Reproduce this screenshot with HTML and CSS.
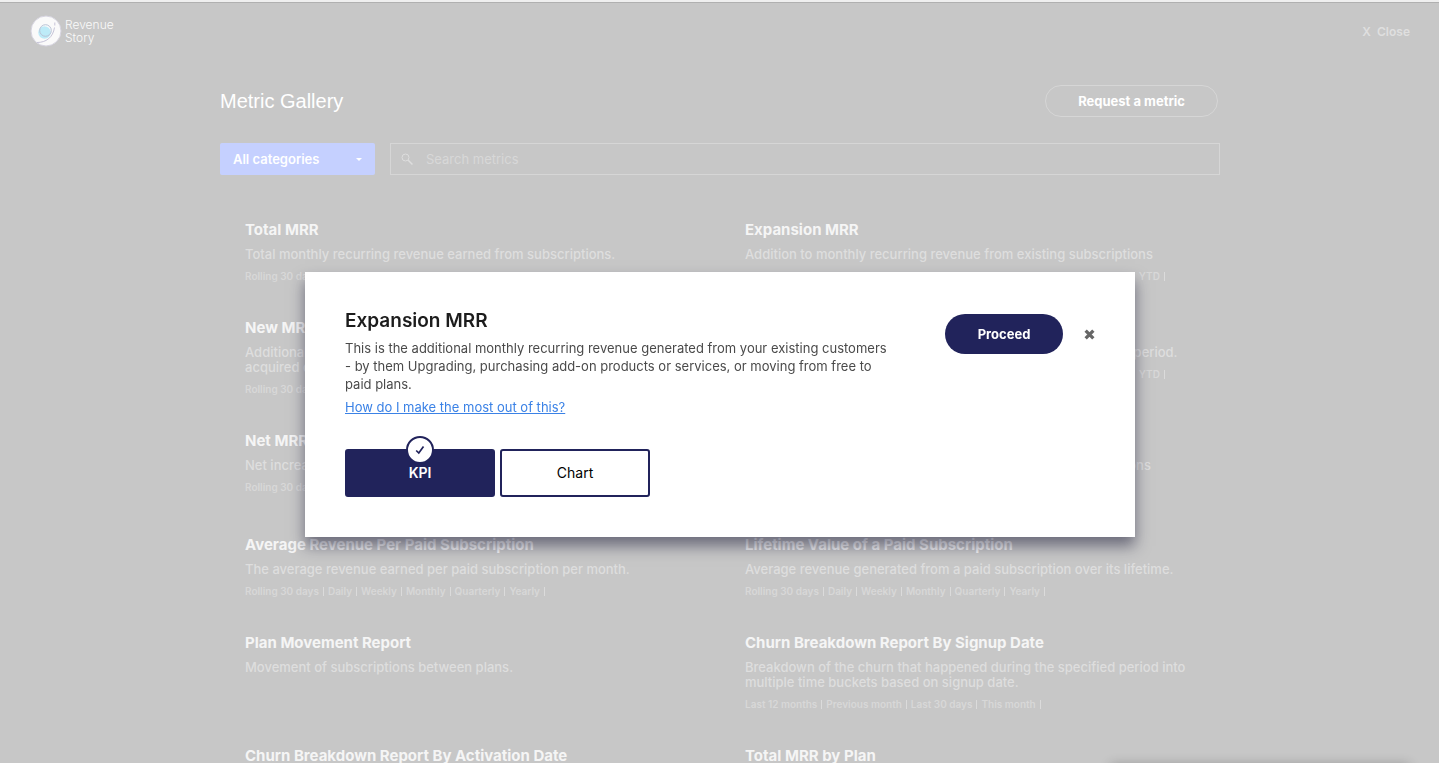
FILE: index.html
```html
<!DOCTYPE html>
<html lang="en">
<head>
<meta charset="utf-8">
<title>Metric Gallery</title>
<link rel="stylesheet" href="styles.css">
</head>
<body>
<div class="page">
  <header class="topbar">
    <a class="brand" href="#">
      <svg class="brand-mark" viewBox="0 0 32 32" aria-hidden="true">
        <circle cx="16" cy="16" r="15" fill="#fafafa" stroke="#d6d4e0"/>
        <circle cx="14.500" cy="17.500" r="6.200" fill="#bdebf8"/>
        <circle cx="15.500" cy="15.500" r="5.800" fill="none" stroke="#b9c3d6"/>
        <path d="M7 27.500c9 0 16-5 17.500-15" fill="none" stroke="#c6c4d8"/>
        <path d="M24.800 7.500v3" fill="none" stroke="#c6c4d8"/>
      </svg>
      <span class="brand-name">Revenue<br>Story</span>
    </a>
    <button class="close-page" type="button">X&nbsp; Close</button>
  </header>

  <main class="gallery">
    <div class="heading">
      <h1 class="heading-title">Metric Gallery</h1>
      <button class="request" type="button">Request a metric</button>
    </div>
    <div class="filters">
      <div class="category">
        <select class="category-select" aria-label="Category"><option>All categories</option></select>
        <svg class="category-caret" viewBox="0 0 6 3" aria-hidden="true"><path d="M0 0h6L3 3z" fill="#fff"/></svg>
      </div>
      <label class="search">
        <svg class="search-icon" viewBox="0 0 13 13" fill="none" stroke="#dedede" aria-hidden="true"><circle cx="4.500" cy="4.500" r="3.500"/><path d="M7.200 7.200l4.300 4.300" stroke-width="1.500"/></svg>
        <input class="search-input" type="text" placeholder="Search metrics" aria-label="Search metrics">
      </label>
    </div>

    <div class="metrics">
      <article class="metric">
        <h2 class="metric-title">Total MRR</h2>
        <p class="metric-text">Total monthly recurring revenue earned from subscriptions.</p>
        <ul class="periods"><li>Rolling 30 days</li></ul>
      </article>
      <article class="metric">
        <h2 class="metric-title">Expansion MRR</h2>
        <p class="metric-text">Addition to monthly recurring revenue from existing subscriptions</p>
        <ul class="periods"><li>Rolling 30 days</li><li>Daily</li><li>Weekly</li><li>Monthly</li><li>Quarterly</li><li>Yearly</li><li>MTD</li><li>Last week</li><li>YTD</li></ul>
      </article>
      <article class="metric">
        <h2 class="metric-title">New MRR</h2>
        <p class="metric-text">Additional monthly recurring revenue from newly<br>acquired customers.</p>
        <ul class="periods"><li>Rolling 30 days</li></ul>
      </article>
      <article class="metric">
        <h2 class="metric-title">Contraction MRR</h2>
        <p class="metric-text">Monthly recurring revenue lost by downgrades in the selected period.</p>
        <ul class="periods"><li>Rolling 30 days</li><li>Daily</li><li>Weekly</li><li>Monthly</li><li>Quarterly</li><li>Yearly</li><li>MTD</li><li>Last week</li><li>YTD</li></ul>
      </article>
      <article class="metric metric-tall">
        <h2 class="metric-title">Net MRR</h2>
        <p class="metric-text">Net increase in monthly recurring revenue.</p>
        <ul class="periods"><li>Rolling 30 days</li></ul>
      </article>
      <article class="metric metric-tall">
        <h2 class="metric-title">Churned MRR</h2>
        <p class="metric-text">Drop in monthly recurring revenue from discounted subscriptions</p>
      </article>
      <article class="metric">
        <h2 class="metric-title">Average Revenue Per Paid Subscription</h2>
        <p class="metric-text">The average revenue earned per paid subscription per month.</p>
        <ul class="periods"><li>Rolling 30 days</li><li>Daily</li><li>Weekly</li><li>Monthly</li><li>Quarterly</li><li>Yearly</li></ul>
      </article>
      <article class="metric">
        <h2 class="metric-title">Lifetime Value of a Paid Subscription</h2>
        <p class="metric-text">Average revenue generated from a paid subscription over its lifetime.</p>
        <ul class="periods"><li>Rolling 30 days</li><li>Daily</li><li>Weekly</li><li>Monthly</li><li>Quarterly</li><li>Yearly</li></ul>
      </article>
      <article class="metric">
        <h2 class="metric-title">Plan Movement Report</h2>
        <p class="metric-text">Movement of subscriptions between plans.</p>
      </article>
      <article class="metric">
        <h2 class="metric-title">Churn Breakdown Report By Signup Date</h2>
        <p class="metric-text">Breakdown of the churn that happened during the specified period into multiple time buckets based on signup date.</p>
        <ul class="periods"><li>Last 12 months</li><li>Previous month</li><li>Last 30 days</li><li>This month</li></ul>
      </article>
      <article class="metric">
        <h2 class="metric-title">Churn Breakdown Report By Activation Date</h2>
      </article>
      <article class="metric">
        <h2 class="metric-title">Total MRR by Plan</h2>
      </article>
    </div>
  </main>
</div>
<div class="widget-shadow"></div>

<div class="overlay">
  <section class="dialog" role="dialog" aria-labelledby="dialog-title">
    <div class="dialog-head">
      <div class="dialog-copy">
        <h2 class="dialog-title" id="dialog-title">Expansion MRR</h2>
        <p class="dialog-text">This is the additional monthly recurring revenue generated from your existing customers - by them Upgrading, purchasing add-on products or services, or moving from free to paid plans.</p>
        <a class="dialog-link" href="#">How do I make the most out of this?</a>
      </div>
      <div class="dialog-actions">
        <button class="proceed" type="button">Proceed</button>
        <button class="dismiss" type="button" aria-label="Dismiss">
          <svg class="dismiss-icon" viewBox="0 0 10 10" aria-hidden="true"><path d="M1.500 1.500l7 7M8.500 1.500l-7 7" stroke="#666" stroke-width="3"/></svg>
        </button>
      </div>
    </div>
    <div class="types">
      <button class="type type-selected" type="button" aria-pressed="true">KPI
        <span class="type-badge"><svg class="type-check" viewBox="0 0 10 10" aria-hidden="true"><path d="M1.200 5.500L3.800 8 8.500 1.500" fill="none" stroke="#21235b" stroke-width="1.700"/></svg></span>
      </button>
      <button class="type" type="button" aria-pressed="false">Chart</button>
    </div>
  </section>
</div>
</body>
</html>
```
FILE: styles.css
```css
* { box-sizing: border-box; }

body {
  margin: 0;
  height: 100vh;
  overflow: hidden;
  background: #c7c7c7;
  color: #fff;
  font-family: Inter, "Liberation Sans", sans-serif;
}

h1, h2, p, ul { margin: 0; padding: 0; }
button, input, select { font: inherit; color: inherit; }
button { cursor: pointer; }

.page {
  padding-left: 1px;
  border-top: 2px solid #efefef;
  box-shadow: inset 0 1px #b0b0b0;
}

.topbar {
  display: flex;
  justify-content: space-between;
  align-items: center;
  padding: 13px 29px 0;
}

.brand {
  display: flex;
  align-items: center;
  gap: 3px;
  color: #fafafa;
  text-decoration: none;
}
.brand-mark { width: 32px; height: 32px; }
.brand-name { font-size: 12px; line-height: 13px; font-weight: 300; }

.close-page {
  padding: 0;
  border: 0;
  background: none;
  color: #dfdfdf;
  font-size: 12px;
  font-weight: 600;
}

.gallery { width: 1000px; max-width: 100%; margin: 0 auto; }

.heading {
  display: flex;
  justify-content: space-between;
  align-items: center;
  padding: 38px 2px 0 0;
}
.heading-title {
  font-family: "Liberation Sans", Arial, sans-serif;
  font-size: 20px;
  line-height: 24px;
  font-weight: 400;
}
.request {
  height: 32px;
  padding: 0 32px;
  border: 1px solid #d6d6d6;
  border-radius: 16px;
  background: none;
  font-size: 13px;
  font-weight: 700;
}

.filters { display: flex; gap: 15px; margin-top: 26px; }
.category { position: relative; width: 155px; }
.category-select {
  appearance: none;
  width: 100%;
  height: 32px;
  padding: 0 13px;
  border: 0;
  border-radius: 2px;
  background: #c5d0ff;
  font-size: 13px;
  font-weight: 600;
}
.category-caret { position: absolute; right: 13px; top: 15px; width: 6px; height: 3px; pointer-events: none; }
.search {
  display: flex;
  flex: 1;
  align-items: center;
  gap: 12px;
  height: 32px;
  padding: 0 10px;
  border: 1px solid #d6d6d6;
}
.search-icon { width: 13px; height: 13px; }
.search-input {
  flex: 1;
  padding: 0;
  border: 0;
  outline: 0;
  background: none;
  font-size: 13px;
}
.search-input::placeholder { color: #d8d8d8; opacity: 1; }

.metrics {
  display: grid;
  grid-template-columns: 1fr 1fr;
  margin-top: 46px;
}
.metric { padding: 0 25px 36px; }
.metric-tall { padding-bottom: 42px; }
.metric-title { color: #f5f5f5; font-size: 15px; line-height: 18px; font-weight: 700; }
.metric-text {
  margin-top: 8px;
  color: #dedede;
  font-size: 13px;
  line-height: 15px;
  font-weight: 500;
}
.periods {
  display: flex;
  margin-top: 10px;
  padding-bottom: 2px;
  list-style: none;
  color: #d8d8d8;
  font-size: 10px;
  line-height: 9px;
  font-weight: 600;
  white-space: nowrap;
}
.periods li { padding-right: 4px; margin-right: 4px; border-right: 1px solid #dbdbdb; }

.widget-shadow {
  position: fixed;
  right: 30px;
  bottom: -10px;
  width: 298px;
  height: 8px;
  box-shadow: 0 0 12px rgba(0, 0, 0, 0.3);
}

.overlay {
  position: fixed;
  inset: 0;
  display: flex;
  justify-content: center;
  align-items: flex-start;
  padding: 272px 0 0 1px;
}
.dialog {
  width: 830px;
  padding: 38px 40px 40px;
  background: #fff;
  color: #4a4a4a;
  box-shadow: 0 9px 14px rgba(33, 33, 60, 0.55);
}
.dialog-head { display: flex; justify-content: space-between; }
.dialog-copy { width: 550px; }
.dialog-title { color: #1c1c1c; font-size: 19px; line-height: 22px; font-weight: 600; }
.dialog-text { margin-top: 7px; font-size: 13px; line-height: 18px; }
.dialog-link { display: inline-block; margin-top: 5px; color: #3b82e6; font-size: 13px; line-height: 18px; }
.dialog-actions { display: flex; align-items: center; gap: 21px; height: 48px; }
.proceed {
  width: 118px;
  height: 40px;
  border: 0;
  border-radius: 20px;
  background: #21235b;
  color: #fff;
  font-size: 13px;
  font-weight: 700;
}
.dismiss { display: flex; padding: 1px 0; border: 0; background: none; }
.dismiss-icon { width: 11px; height: 11px; }

.types { display: flex; gap: 5px; margin-top: 33px; }
.type {
  position: relative;
  width: 150px;
  height: 48px;
  padding: 0 0 2px;
  border: 2px solid #21235b;
  border-radius: 3px;
  background: #fff;
  color: #000;
  font-size: 14px;
}
.type-selected { background: #21235b; color: #fff; font-weight: 600; }
.type-badge {
  position: absolute;
  top: -15px;
  left: 50%;
  display: flex;
  align-items: center;
  justify-content: center;
  width: 28px;
  height: 28px;
  margin-left: -14px;
  border: 2px solid #21235b;
  border-radius: 50%;
  background: #fff;
}
.type-check { width: 10px; height: 10px; }
```
